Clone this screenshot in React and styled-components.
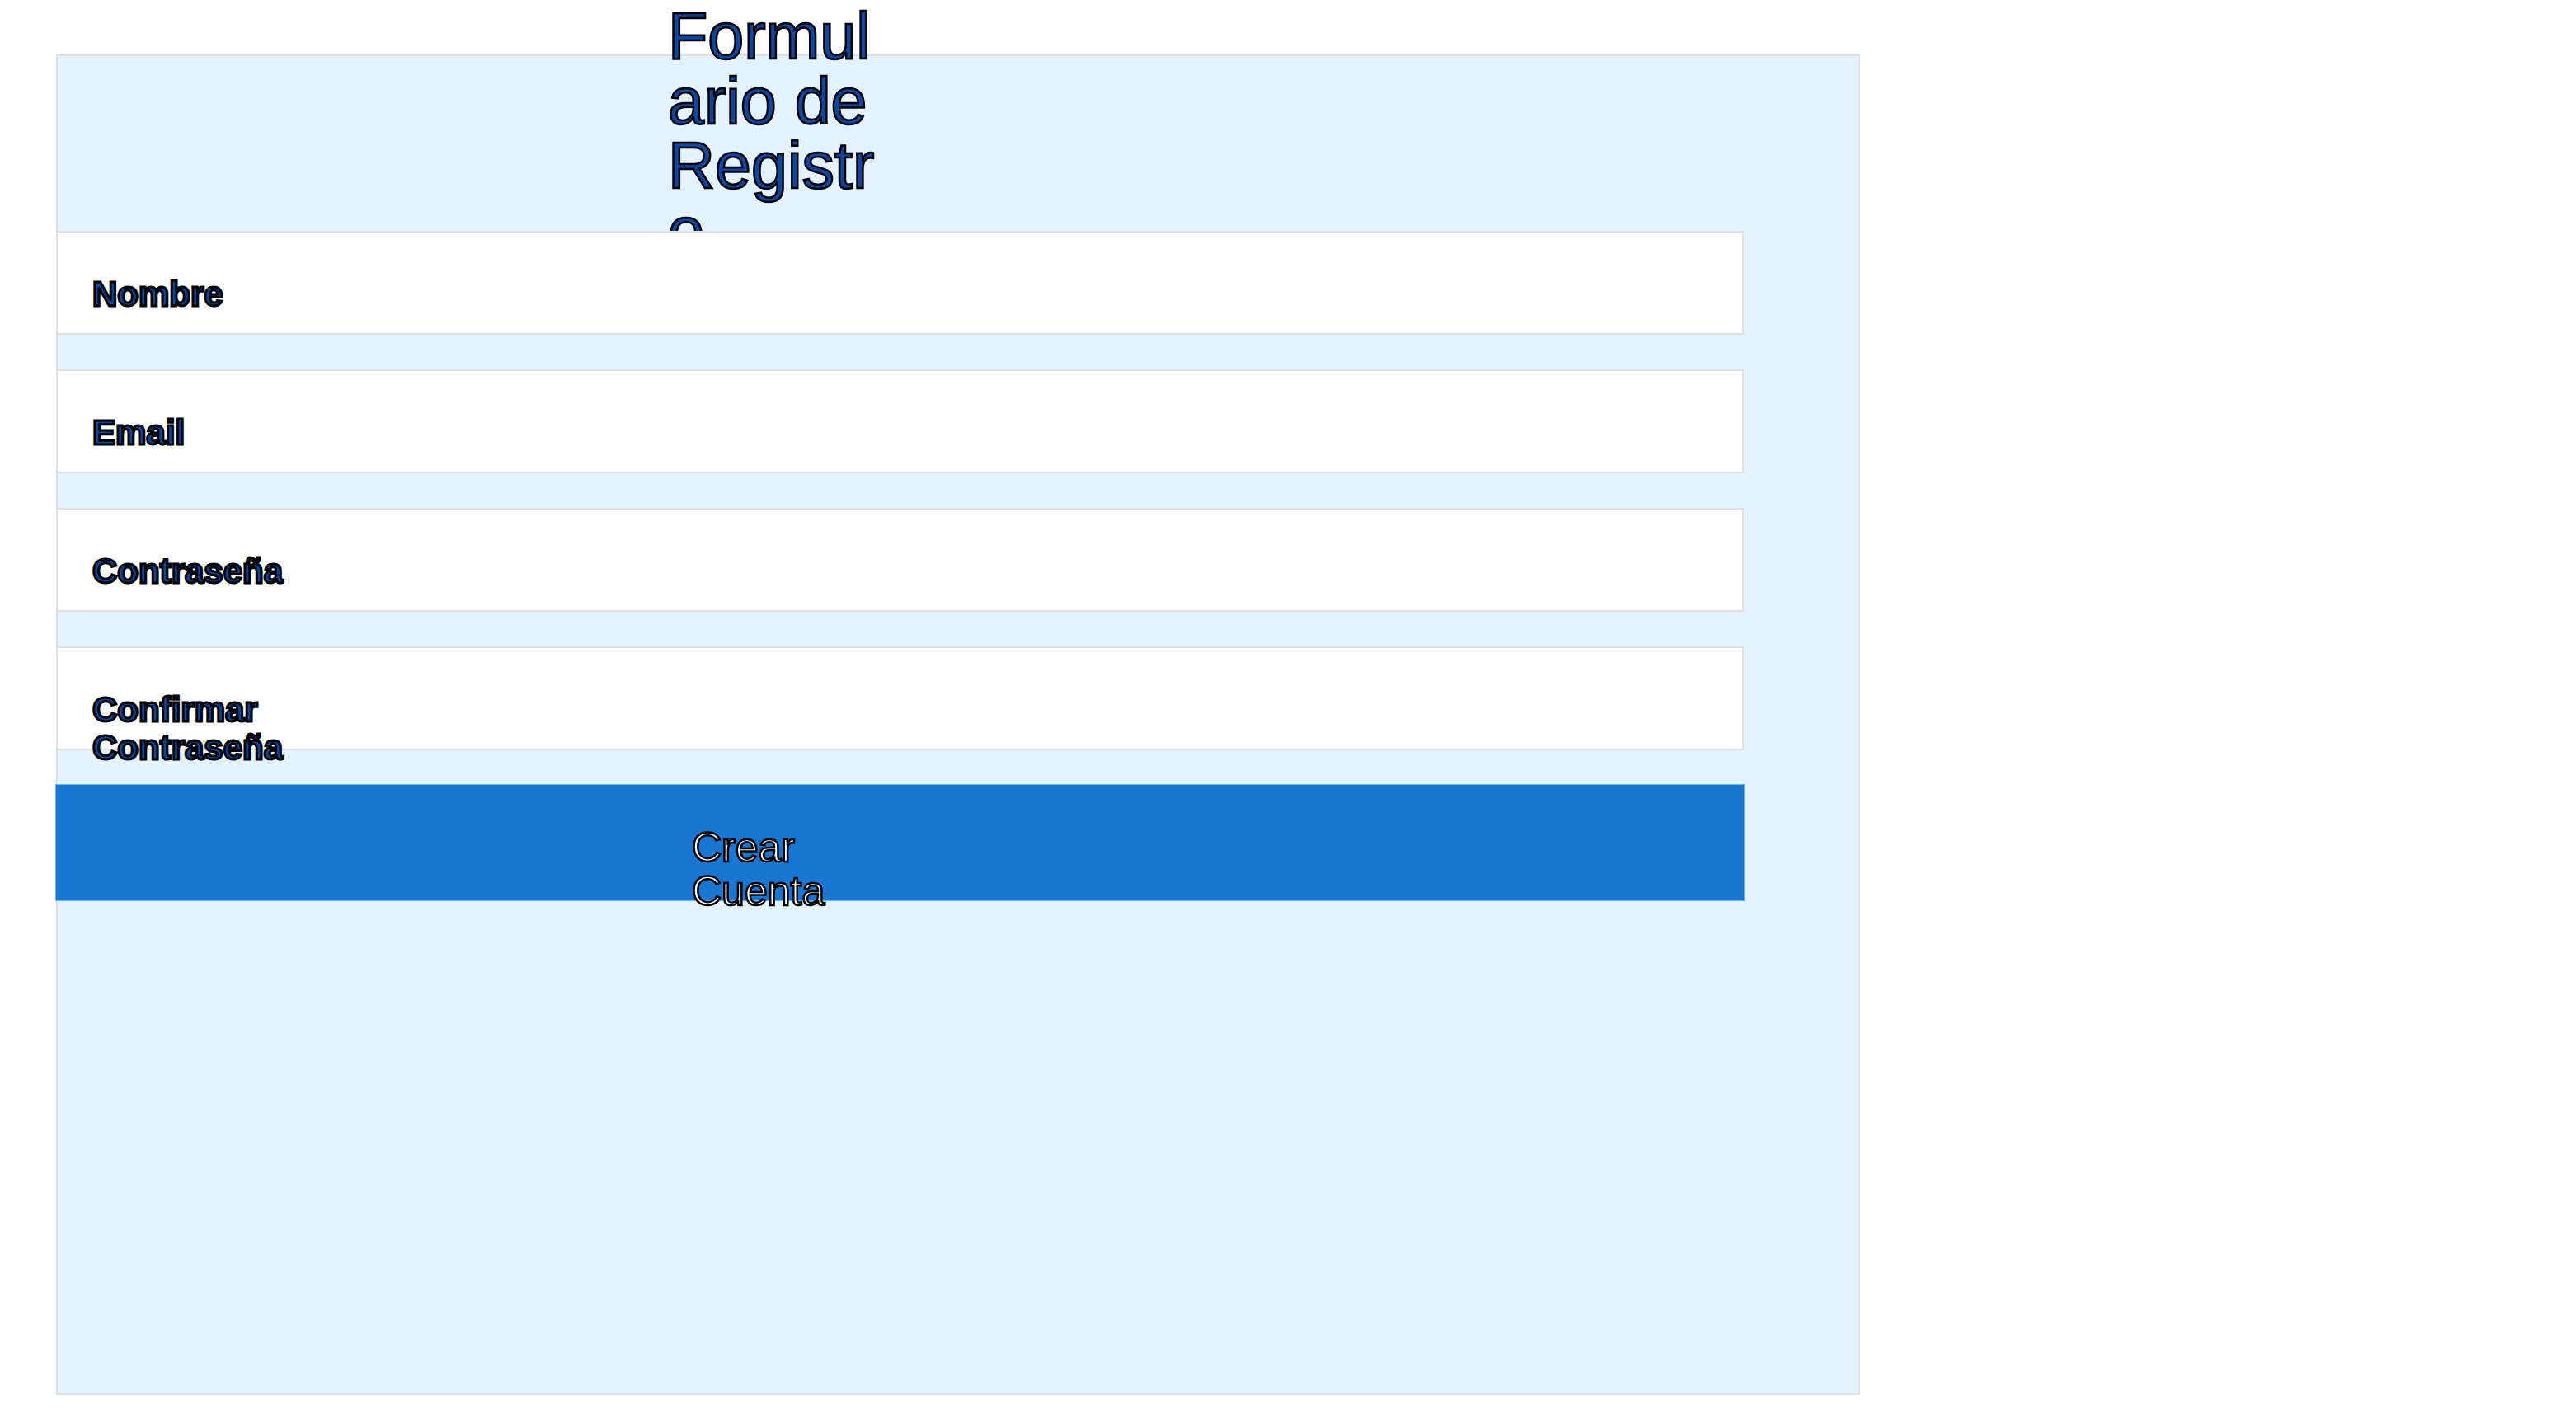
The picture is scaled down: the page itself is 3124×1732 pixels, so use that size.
import React from "react";
import styled, { createGlobalStyle } from "styled-components";

const GlobalStyle = createGlobalStyle`
  html, body {
    margin: 0;
    padding: 0;
    background: #ffffff;
    font-family: "Liberation Sans", Arial, sans-serif;
  }
  * { box-sizing: border-box; }
`;

const Page = styled.div`
  padding: 66px 0 0 68px;
  min-height: 1732px;
`;

const Panel = styled.div`
  width: 2188px;
  height: 1626px;
  background: #e3f2fd;
  border: 2px solid #e0e0e0;
  display: flex;
  flex-direction: column;
`;

const Header = styled.div`
  height: 212px;
  padding-left: 740px;
  flex-shrink: 0;
`;

const Title = styled.h1`
  margin: -63px 0 0 0;
  width: 264px;
  font-size: 79px;
  line-height: 78.5px;
  font-weight: 400;
  color: #0d47a1;
  -webkit-text-stroke: 2.5px #000;
  word-break: break-all;
`;

const Form = styled.form`
  display: flex;
  flex-direction: column;
  gap: 42px;
`;

const Field = styled.div`
  position: relative;
  z-index: 1;
  width: 2047px;
  height: 126px;
  margin-left: -2px;
  padding: 52px 0 0 42px;
  background: #ffffff;
  border: 2px solid #e0e0e0;
`;

const Label = styled.label`
  display: block;
  width: 300px;
  font-size: 42px;
  line-height: 46px;
  font-weight: 700;
  color: #0d47a1;
  -webkit-text-stroke: 3px #000;
`;

const Button = styled.button`
  position: relative;
  z-index: 1;
  display: block;
  width: 2049px;
  height: 142px;
  margin-left: -3px;
  margin-top: -1px;
  padding: 50px 0 0 771px;
  background: #1976d2;
  border: 1px solid #64b5f6;
  text-align: left;
  font-family: "Liberation Sans", Arial, sans-serif;
  cursor: pointer;
`;

const ButtonText = styled.span`
  display: block;
  width: 210px;
  font-size: 50px;
  line-height: 53px;
  color: #ffffff;
  -webkit-text-stroke: 2.5px #000;
  white-space: normal;
`;

const fields = ["Nombre", "Email", "Contraseña", "Confirmar Contraseña"];

export default function App() {
  return (
    <>
      <GlobalStyle />
      <Page>
        <Panel>
          <Header>
            <Title>Formulario de Registro</Title>
          </Header>
          <Form onSubmit={(e) => e.preventDefault()}>
            {fields.map((f) => (
              <Field key={f}>
                <Label>{f}</Label>
              </Field>
            ))}
            <Button type="submit">
              <ButtonText>Crear Cuenta</ButtonText>
            </Button>
          </Form>
        </Panel>
      </Page>
    </>
  );
}
